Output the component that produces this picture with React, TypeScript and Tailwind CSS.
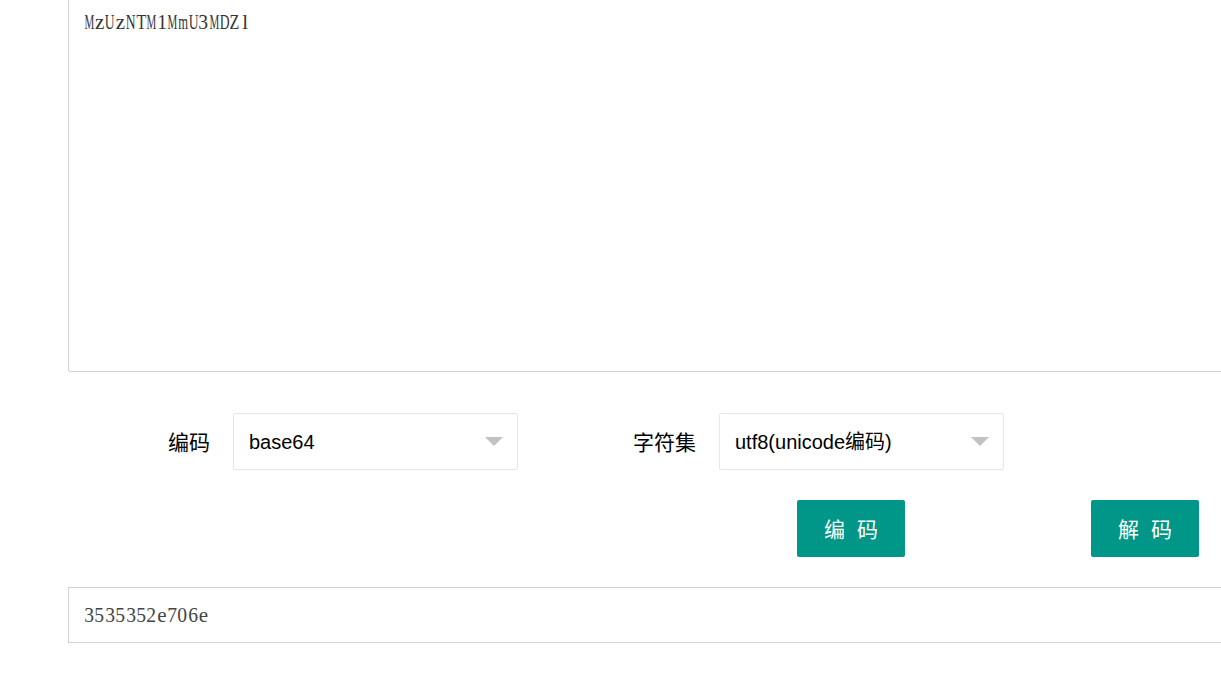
import React from "react";

function Caret() {
  return (
    <svg width="18" height="10" viewBox="0 0 18 10" className="shrink-0">
      <polygon points="0,0 18,0 9,9" fill="#c2c2c2" />
    </svg>
  );
}

function SelectBox({ value }: { value: string }) {
  return (
    <div className="flex items-center justify-between w-[285px] h-[57px] border border-[#e6e6e6] rounded-[2px] bg-white pl-[15px] pr-[14px]">
      <span className="text-[20px] text-black" style={{ fontFamily: '"Liberation Sans", Arial, "Noto Sans CJK SC", sans-serif' }}>
        {value}
      </span>
      <Caret />
    </div>
  );
}

const widths: Record<string, number> = {
  M: 0.889, m: 0.778, U: 0.722, N: 0.722, D: 0.722, T: 0.611, Z: 0.611, z: 0.444, l: 0.278, e: 0.444,
};

function SerifMono({ text, color }: { text: string; color: string }) {
  return (
    <span className={`inline-flex ${color}`} style={{ fontFamily: '"Liberation Serif", "Times New Roman", serif' }}>
      {text.split("").map((c, i) => {
        const w = (widths[c] ?? 0.5) * 21;
        const s = Math.min(1, 9.8 / w);
        return (
          <span key={i} className="flex justify-center w-[10.4px] text-[21px] leading-[24px]">
            <span className="inline-block" style={{ transform: `scaleX(${s})` }}>{c}</span>
          </span>
        );
      })}
    </span>
  );
}

export default function App() {
  const cjk = '"Noto Sans CJK SC", "Liberation Sans", sans-serif';
  return (
    <div className="w-[1221px] h-[681px] overflow-hidden bg-white">
      <div className="pl-[68px] w-[1400px]">
        <div className="-mt-px h-[373px] w-[1300px] border border-[#d2d2d2] rounded-[2px] pl-[15px] pt-[10px]">
          <SerifMono text="MzUzNTM1MmU3MDZl" color="text-[#333]" />
        </div>

        <div className="mt-[41px] flex items-center">
          <div className="w-[165px] pr-[23px] text-right text-[21px] text-black" style={{ fontFamily: cjk }}>
            编码
          </div>
          <SelectBox value="base64" />
          <div className="ml-[36px] w-[165px] pr-[23px] text-right text-[21px] text-black" style={{ fontFamily: cjk }}>
            字符集
          </div>
          <SelectBox value="utf8(unicode编码)" />
        </div>

        <div className="mt-[30px] flex pl-[729px] gap-[186px]">
          <button className="w-[108px] h-[57px] rounded-[2px] bg-[#009688] text-white text-[21px] flex items-center justify-center gap-[12px]" style={{ fontFamily: cjk }}>
            <span>编</span>
            <span>码</span>
          </button>
          <button className="w-[108px] h-[57px] rounded-[2px] bg-[#009688] text-white text-[21px] flex items-center justify-center gap-[12px]" style={{ fontFamily: cjk }}>
            <span>解</span>
            <span>码</span>
          </button>
        </div>

        <div className="mt-[30px] h-[56px] w-[1300px] border border-[#d2d2d2] flex items-center pl-[15px]">
          <SerifMono text="3535352e706e" color="text-[#444]" />
        </div>
      </div>
    </div>
  );
}
